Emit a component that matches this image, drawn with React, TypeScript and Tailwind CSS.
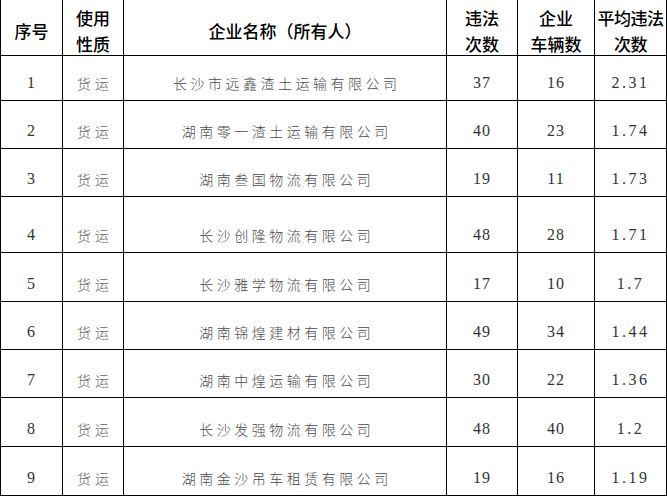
const rows = [
  { no: "1", name: "长沙市远鑫渣土运输有限公司", count: "37", cars: "16", avg: "2.31", h: "h-[45px]" },
  { no: "2", name: "湖南零一渣土运输有限公司", count: "40", cars: "23", avg: "1.74", h: "h-[48px]" },
  { no: "3", name: "湖南叁国物流有限公司", count: "19", cars: "11", avg: "1.73", h: "h-[48px]" },
  { no: "4", name: "长沙创隆物流有限公司", count: "48", cars: "28", avg: "1.71", h: "h-[56px]" },
  { no: "5", name: "长沙雅学物流有限公司", count: "17", cars: "10", avg: "1.7", h: "h-[49px]" },
  { no: "6", name: "湖南锦煌建材有限公司", count: "49", cars: "34", avg: "1.44", h: "h-[48px]" },
  { no: "7", name: "湖南中煌运输有限公司", count: "30", cars: "22", avg: "1.36", h: "h-[48px]" },
  { no: "8", name: "长沙发强物流有限公司", count: "48", cars: "40", avg: "1.2", h: "h-[49px]" },
  { no: "9", name: "湖南金沙吊车租赁有限公司", count: "19", cars: "16", avg: "1.19", h: "h-[49px]" },
];

const head =
  "flex h-[56px] flex-col items-center justify-center border-b border-r border-black pt-[6px] text-[17px] leading-[26px] font-medium text-black";
const cjk = "font-[family-name:'Noto_Sans_CJK_SC',sans-serif]";
const num = "font-[family-name:'Liberation_Serif',serif] text-[16px] text-[#333] tracking-[1px]";

function Cell({ h, className, children }: { h: string; className?: string; children: React.ReactNode }) {
  return (
    <div className={`flex items-end justify-center border-b border-r border-black pb-[8px] leading-[18px] ${h} ${className ?? ""}`}>
      {children}
    </div>
  );
}

export default function App() {
  return (
    <div className={`w-[667px] bg-white ${cjk}`}>
      <div className="grid grid-cols-[63px_61px_323px_71px_77px_72px]">
        <div className={`${head} border-l`}>序号</div>
        <div className={head}>
          <span>使用</span>
          <span>性质</span>
        </div>
        <div className={head}>企业名称（所有人）</div>
        <div className={head}>
          <span>违法</span>
          <span>次数</span>
        </div>
        <div className={head}>
          <span>企业</span>
          <span>车辆数</span>
        </div>
        <div className={`${head} tracking-[-0.5px]`}>
          <span>平均违法</span>
          <span>次数</span>
        </div>

        {rows.map((r) => (
          <div key={r.no} className="contents">
            <Cell h={r.h} className={`border-l ${num}`}>
              {r.no}
            </Cell>
            <Cell h={r.h} className="text-[14px] font-light tracking-[4px] text-[#666]">
              <span className="ml-[4px]">货运</span>
            </Cell>
            <Cell h={r.h} className="text-[14px] font-light tracking-[3.5px] text-[#4a4a4a]">
              <span className="ml-[3.5px]">{r.name}</span>
            </Cell>
            <Cell h={r.h} className={num}>
              {r.count}
            </Cell>
            <Cell h={r.h} className={num}>
              {r.cars}
            </Cell>
            <Cell h={r.h} className={`${num} tracking-[2.5px]`}>
              {r.avg}
            </Cell>
          </div>
        ))}
      </div>
    </div>
  );
}
